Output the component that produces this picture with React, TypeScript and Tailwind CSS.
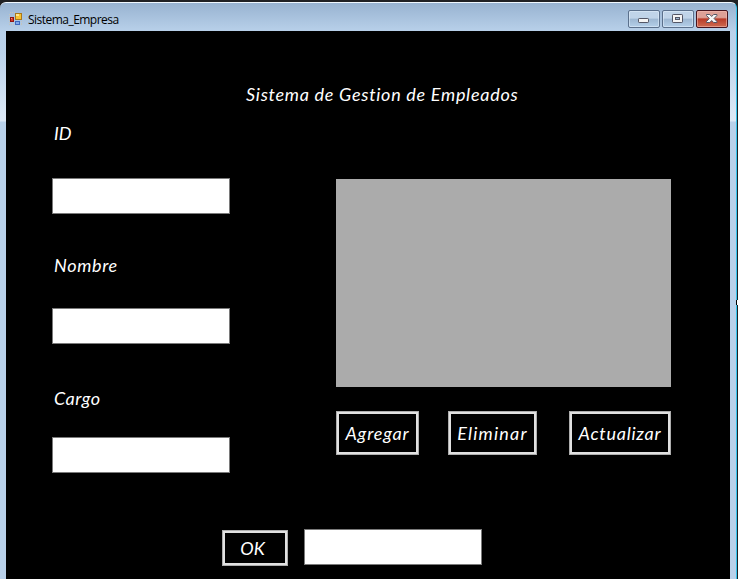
import type { ReactNode } from 'react'

const hand = "font-['Lato','Open_Sans',sans-serif] italic text-white whitespace-nowrap text-[18px] leading-5"

function Field({ className = '' }: { className?: string }) {
  return (
    <input
      type="text"
      className={`block h-9 w-[178px] rounded-none border border-[#7a7a7a] bg-white px-2 text-black outline-none ${className}`}
    />
  )
}

function FormButton({ className, children }: { className: string; children: ReactNode }) {
  return (
    <button
      className={`${hand} flex items-center justify-center border border-[#adadad] bg-black shadow-[inset_0_0_0_2px_#e1e1e1] ${className}`}
    >
      {children}
    </button>
  )
}

function AppIcon() {
  return (
    <svg width="14" height="14" viewBox="0 0 14 14" shapeRendering="crispEdges">
      <path d="M5.5 .5h-5v12h12v-5" fill="none" stroke="#c4c4be" strokeDasharray="1 1" />
      <rect x="6" y="1" width="7" height="7" fill="#a9781b" />
      <rect x="7" y="2" width="5" height="5" fill="#f7c332" />
      <rect x="7" y="2" width="3" height="2" fill="#ffe88c" />
      <rect x="1" y="5" width="4" height="5" fill="#8e1512" />
      <rect x="2" y="6" width="2" height="3" fill="#d93a2a" />
      <rect x="2" y="6" width="1" height="1" fill="#f08c7c" />
      <rect x="6" y="9" width="5" height="4" fill="#3c67bd" />
      <rect x="7" y="10" width="3" height="2" fill="#7fa9ee" />
    </svg>
  )
}

const captionButton =
  'flex h-[18px] w-8 items-center justify-center rounded-[2px] border border-[#5b708c] bg-linear-to-b from-[#c0d4e9] from-45% via-[#9db7d2] via-50% to-[#b4cfe9] shadow-[inset_0_0_0_1px_rgba(225,239,252,0.55)]'

function TitleBar() {
  return (
    <header className="-ml-[5px] flex h-[27px] items-start">
      <div className="mt-[9px] ml-2">
        <AppIcon />
      </div>
      <span className="mt-[9px] ml-[5px] font-['Open_Sans','Noto_Sans',sans-serif] text-[12px] leading-4 tracking-[-0.53px] text-black">
        Sistema_Empresa
      </span>
      <div className="mt-[7px] mr-0.5 ml-auto flex gap-0.5">
        <button className={captionButton} aria-label="Minimizar">
          <svg width="32" height="18" viewBox="0 0 32 18" className="-m-px shrink-0">
            <rect x="10.5" y="8.5" width="10" height="4" rx=".7" fill="#f4f4f4" stroke="#535666" />
          </svg>
        </button>
        <button className={captionButton} aria-label="Maximizar">
          <svg width="32" height="18" viewBox="0 0 32 18" className="-m-px shrink-0">
            <rect x="10.5" y="4.5" width="10" height="8" rx=".7" fill="#f4f4f4" stroke="#535666" />
            <rect x="13.5" y="7.5" width="4" height="2" fill="#9eb7d0" stroke="#535666" />
          </svg>
        </button>
        <button
          className="flex h-[18px] w-8 items-center justify-center rounded-[2px] border border-[#46151f] bg-linear-to-b from-[#dda097] from-40% via-[#b83b29] via-50% to-[#ce6a50] shadow-[inset_0_0_0_1px_rgba(245,190,180,0.55)]"
          aria-label="Cerrar"
        >
          <svg width="32" height="18" viewBox="0 0 32 18" className="-m-px shrink-0">
            <path
              d="M10.5 4.5h3.3l1.9 2 1.9-2h3.3v1l-2.8 3 2.8 3v1h-3.3l-1.9-2-1.9 2h-3.3v-1l2.8-3-2.8-3z"
              fill="#f7f7f7"
              stroke="#535666"
            />
          </svg>
        </button>
      </div>
    </header>
  )
}

export default function App() {
  return (
    <div className="relative h-[579px] w-[738px] overflow-hidden bg-[#202124] pt-0.5 pr-px">
      <div className="flex h-[577px] flex-col rounded-t-[6px] border-t border-r border-t-[#f0f8ff] border-r-[#35c5ee] bg-[linear-gradient(to_bottom,#98b3d1_0px,#b9d1ea_29px,#bcd3eb_50px,#dae7f5_110px,#dce8f5_118px,#b9d1ea_119px)] px-1.5">
        <TitleBar />
        <main className="mt-px flex min-h-0 flex-1 flex-col bg-black">
          <h1 className={`${hand} mt-[53px] ml-[240px] h-5 tracking-[0.72px]`}>Sistema de Gestion de Empleados</h1>
          <div className="flex">
            <section className="ml-[46px] w-[178px]">
              <label className={`${hand} mt-[19px] ml-0.5 block h-5`}>ID</label>
              <Field className="mt-[35px]" />
              <label className={`${hand} mt-[41px] ml-0.5 block h-5 tracking-[0.65px]`}>Nombre</label>
              <Field className="mt-[33px]" />
              <label className={`${hand} mt-[44px] ml-0.5 block h-5 tracking-[0.5px]`}>Cargo</label>
              <Field className="mt-[29px]" />
            </section>
            <section className="mt-[75px] ml-[106px] w-[335px]">
              <div className="h-[208px] bg-[#ababab]" />
              <div className="mt-6 flex justify-between">
                <FormButton className="h-11 w-[83px] tracking-[0.85px]">Agregar</FormButton>
                <FormButton className="-ml-[3px] h-11 w-[89px] tracking-[1.2px]">Eliminar</FormButton>
                <FormButton className="h-11 w-[102px] tracking-[0.75px]">Actualizar</FormButton>
              </div>
            </section>
          </div>
          <div className="mt-14 ml-[216px] flex gap-4">
            <FormButton className="mt-px h-9 w-[66px] pr-[5px]">OK</FormButton>
            <Field />
          </div>
        </main>
      </div>
      <div className="absolute top-[300px] right-0 h-[5px] w-0.5 border-l border-black bg-white" />
    </div>
  )
}
